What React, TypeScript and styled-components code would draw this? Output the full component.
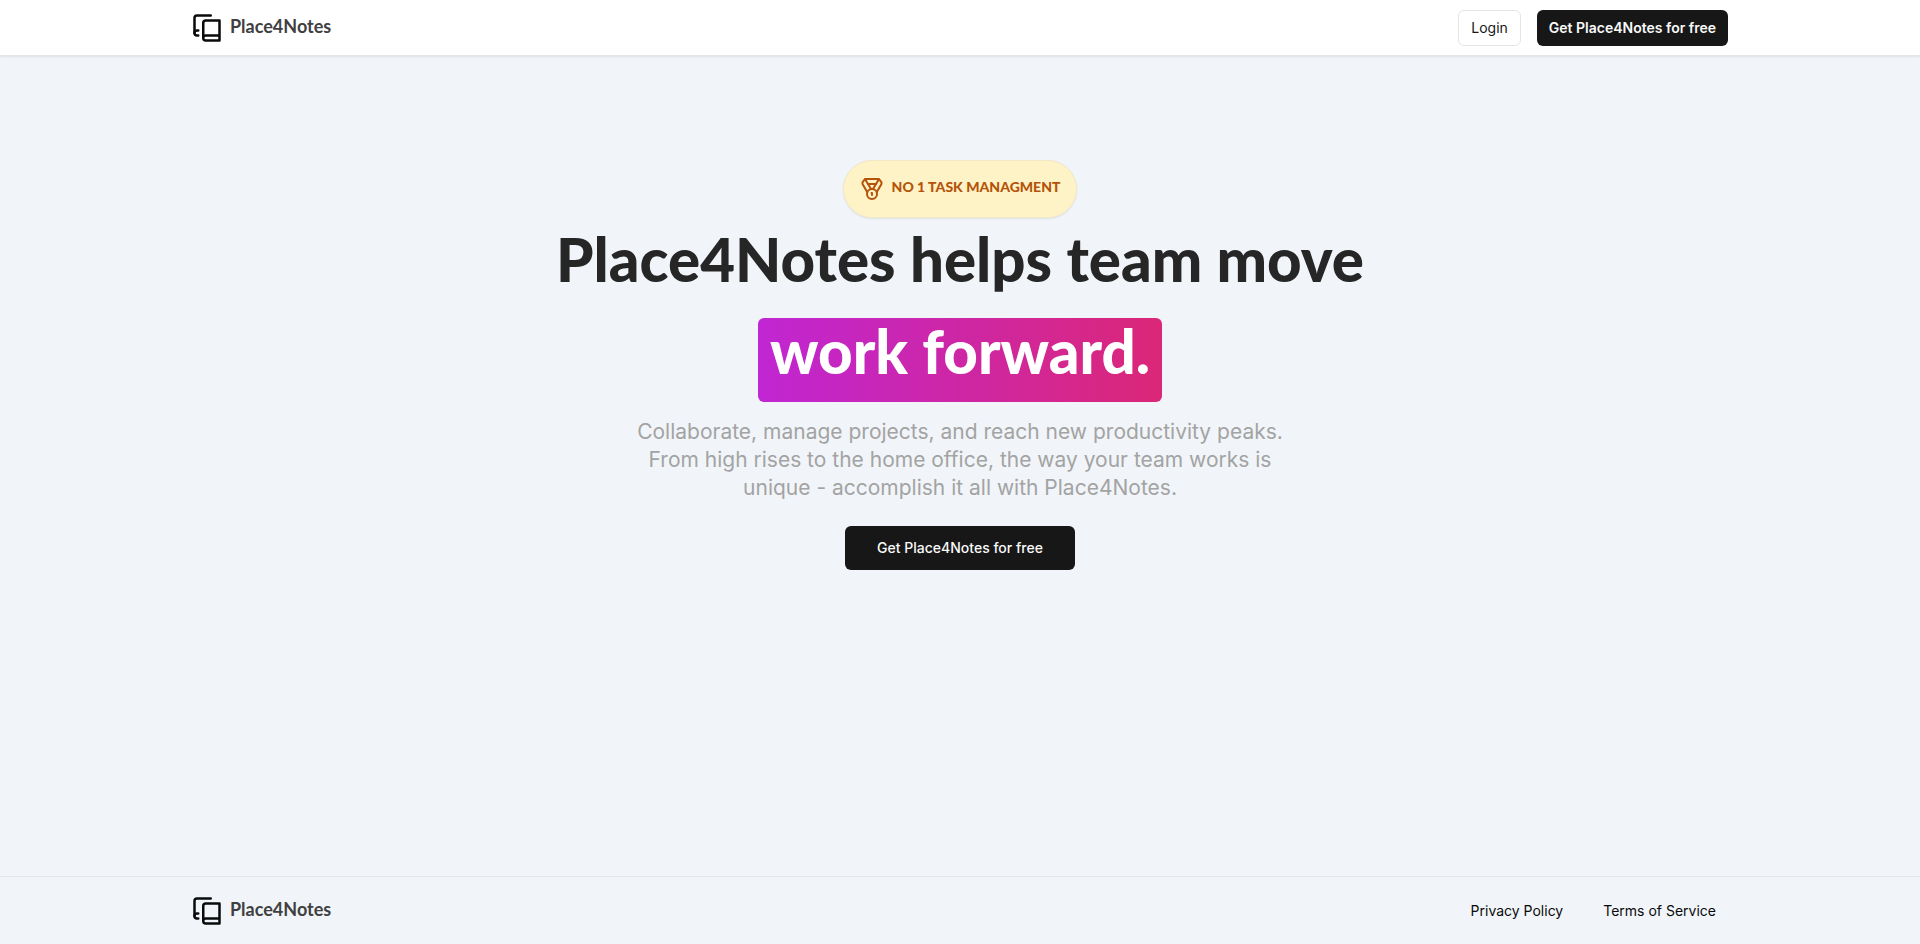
import React from "react";
import styled, { createGlobalStyle } from "styled-components";
import { Medal } from "lucide-react";

const displayFont = `Lato, "Liberation Sans", sans-serif`;
const bodyFont = `Inter, "Liberation Sans", sans-serif`;

const GlobalStyle = createGlobalStyle`
  *, *::before, *::after { box-sizing: border-box; }
  body {
    margin: 0;
    background: #f1f5f9;
    color: #0a0a0a;
    font-family: ${bodyFont};
    font-size: 14px;
    line-height: 20px;
  }
  h1, p { margin: 0; }
`;

const Page = styled.div`
  display: flex;
  flex-direction: column;
  min-height: 100vh;
`;

const Header = styled.header`
  background: #ffffff;
  border-bottom: 1px solid #e5e5e5;
  box-shadow: 0 1px 2px rgba(0, 0, 0, 0.08);
`;

const Footer = styled.footer`
  border-top: 1px solid #e2e5e9;
  padding: 6px 0;
`;

const Container = styled.div`
  display: flex;
  align-items: center;
  justify-content: space-between;
  max-width: 1536px;
  min-height: 55px;
  margin: 0 auto;
`;

const LogoLink = styled.a`
  display: flex;
  align-items: center;
  gap: 8px;
  color: #0a0a0a;
  text-decoration: none;
`;

const LogoText = styled.span`
  padding-bottom: 4px;
  color: #404040;
  font-family: ${displayFont};
  font-size: 18px;
  font-weight: 700;
  line-height: 28px;
`;

const Actions = styled.nav`
  display: flex;
  align-items: center;
  gap: 16px;
`;

const Button = styled.button<{ $variant: "outline" | "primary"; $large?: boolean }>`
  height: ${(p) => (p.$large ? 44 : 36)}px;
  padding: 0 ${(p) => (p.$large ? 32 : 12)}px;
  border: ${(p) => (p.$variant === "outline" ? "1px solid #e5e5e5" : "0")};
  border-radius: 6px;
  background: ${(p) => (p.$variant === "outline" ? "#ffffff" : "#171717")};
  color: ${(p) => (p.$variant === "outline" ? "#171717" : "#fafafa")};
  font-family: ${bodyFont};
  font-size: 14px;
  font-weight: ${(p) => (p.$variant === "outline" ? 400 : p.$large ? 500 : 600)};
  line-height: 20px;
  cursor: pointer;
`;

const FooterLink = styled.a`
  padding: 8px 12px;
  color: #0a0a0a;
  text-decoration: none;
`;

const Hero = styled.main`
  display: flex;
  flex: 1;
  flex-direction: column;
  align-items: center;
  padding: 104px 16px 40px;
  text-align: center;
`;

const Badge = styled.div`
  display: flex;
  align-items: center;
  gap: 8px;
  padding: 16px;
  border: 1px solid #f3e8c4;
  border-radius: 999px;
  background: #fef3c7;
  box-shadow: 0 1px 2px rgba(0, 0, 0, 0.08);
  color: #b45309;
`;

const BadgeText = styled.span`
  padding-bottom: 4px;
  font-family: ${displayFont};
  font-size: 14px;
  font-weight: 900;
  line-height: 20px;
  text-transform: uppercase;
`;

const Title = styled.h1`
  display: flex;
  flex-direction: column;
  align-items: center;
  gap: 26px;
  padding-top: 8px;
  color: #262626;
  font-family: ${displayFont};
  font-size: 60px;
  font-weight: 900;
  line-height: 66px;
`;

const Highlight = styled.span`
  padding: 0 12px 18px;
  border-radius: 6px;
  background: linear-gradient(to right, #c026d3, #db2777);
  color: #ffffff;
  line-height: 66px;
`;

const Lead = styled.p`
  max-width: 672px;
  padding: 16px 0 24px;
  color: #a3a3a3;
  font-family: ${bodyFont};
  font-size: 21px;
  line-height: 28px;
`;

function Logo() {
  return (
    <LogoLink href="#">
      <svg
        width="30"
        height="30"
        viewBox="0 0 24 24"
        fill="none"
        stroke="currentColor"
        strokeWidth="2"
        strokeLinecap="round"
        strokeLinejoin="round"
        aria-hidden="true"
      >
        <path d="M2 16V4a2 2 0 0 1 2-2h11" />
        <path d="M5 14H4a2 2 0 1 0 0 4h1" />
        <path d="M22 18H11a2 2 0 1 0 0 4h11V6H11a2 2 0 0 0-2 2v12" />
      </svg>
      <LogoText>Place4Notes</LogoText>
    </LogoLink>
  );
}

export default function App() {
  return (
    <Page>
      <GlobalStyle />
      <Header>
        <Container>
          <Logo />
          <Actions aria-label="Account">
            <Button type="button" $variant="outline">Login</Button>
            <Button type="button" $variant="primary">Get Place4Notes for free</Button>
          </Actions>
        </Container>
      </Header>
      <Hero>
        <Badge>
          <Medal size={24} aria-hidden="true" />
          <BadgeText>No 1 task managment</BadgeText>
        </Badge>
        <Title>
          <span>Place4Notes helps team move</span>
          <Highlight>work forward.</Highlight>
        </Title>
        <Lead>
          Collaborate, manage projects, and reach new productivity peaks. From high rises to the
          home office, the way your team works is unique - accomplish it all with Place4Notes.
        </Lead>
        <Button type="button" $variant="primary" $large>Get Place4Notes for free</Button>
      </Hero>
      <Footer>
        <Container>
          <Logo />
          <Actions aria-label="Legal">
            <FooterLink href="#">Privacy Policy</FooterLink>
            <FooterLink href="#">Terms of Service</FooterLink>
          </Actions>
        </Container>
      </Footer>
    </Page>
  );
}
